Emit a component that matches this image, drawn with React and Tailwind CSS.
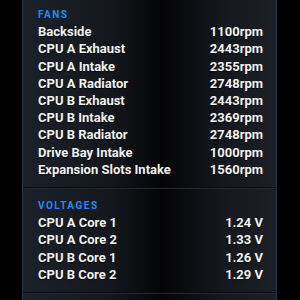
import React from 'react';

const fans = [
    ['Backside', '1100rpm'],
    ['CPU A Exhaust', '2443rpm'],
    ['CPU A Intake', '2355rpm'],
    ['CPU A Radiator', '2748rpm'],
    ['CPU B Exhaust', '2443rpm'],
    ['CPU B Intake', '2369rpm'],
    ['CPU B Radiator', '2748rpm'],
    ['Drive Bay Intake', '1000rpm'],
    ['Expansion Slots Intake', '1560rpm'],
];

const voltages = [
    ['CPU A Core 1', '1.24 V'],
    ['CPU A Core 2', '1.33 V'],
    ['CPU B Core 1', '1.26 V'],
    ['CPU B Core 2', '1.29 V'],
];

const Section = ({ title, rows, className }) => (
    <div className={`pl-[15px] pr-[13px] pb-[9px] border-b border-[#08090b] ${className}`}>
        <div className="leading-[17.2px] text-[10px] font-bold tracking-[1.5px] text-[#1b8df5]">
            {title}
        </div>
        {rows.map(([label, value]) => (
            <div
                key={label}
                className="flex justify-between leading-[17.2px] text-[13px] font-bold text-[#f2f2f0] [text-shadow:0_1px_1px_rgba(0,0,0,0.8)]"
            >
                <span>{label}</span>
                <span>{value}</span>
            </div>
        ))}
    </div>
);

export default function App() {
    return (
        <div className="w-[300px] h-[300px] bg-black flex justify-center overflow-hidden font-['Roboto',sans-serif]">
            <div className="w-[255px] ml-[-1px] h-full border-l border-r border-[#2c3646] bg-[linear-gradient(90deg,#1c2029_0%,#14171d_35%,#040405_55%,#14171d_78%,#1c1f27_100%)]">
                <Section title="FANS" rows={fans} className="pt-[6px]" />
                <Section title="VOLTAGES" rows={voltages} className="pt-[8px] border-t border-t-[#252a33]" />
                <div className="border-t border-[#252a33]" />
            </div>
        </div>
    );
}
